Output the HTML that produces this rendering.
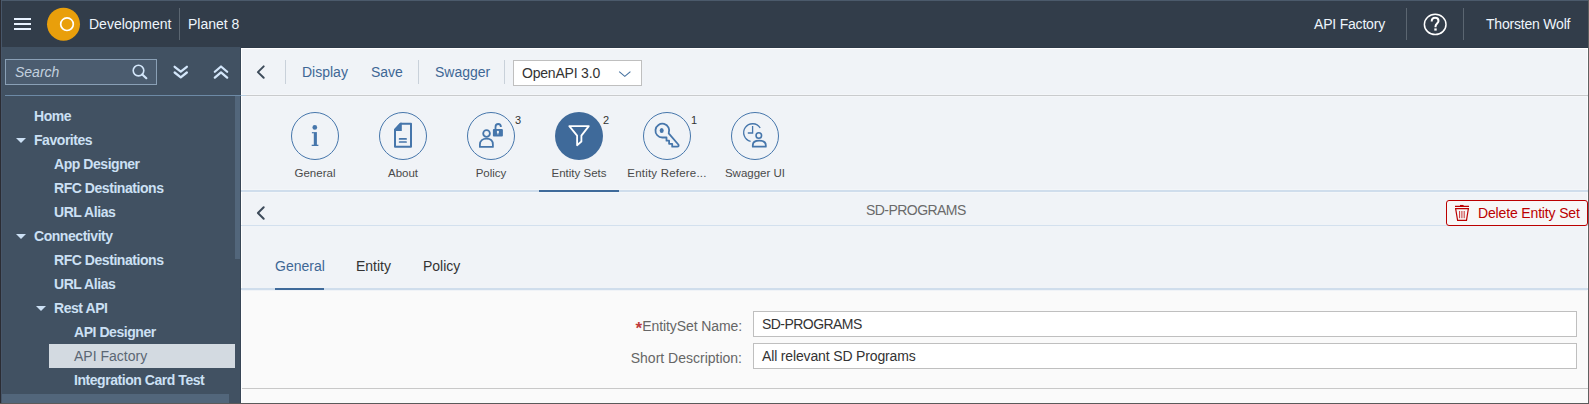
<!DOCTYPE html>
<html><head><meta charset="utf-8">
<style>
*{box-sizing:border-box;margin:0;padding:0}
html,body{width:1589px;height:404px;overflow:hidden;background:#2b2c33;font-family:"Liberation Sans",sans-serif}
.abs{position:absolute}
#frame{position:absolute;left:0;top:0;width:1589px;height:404px;overflow:hidden}
#hdr{left:1px;top:0;width:1587px;height:48px;background:#323d4a;border-top:1px solid #4b5a6b}
.ht{position:absolute;color:#eef5fc;font-size:14px;line-height:16px;white-space:nowrap}
.hsep{position:absolute;top:7px;width:1px;height:32px;background:#5b6671}
#side{left:1px;top:47px;width:240px;height:356px;background:#415162}
#main{left:241px;top:48px;width:1347px;height:355px;background:#f0f3f7}
.nav{position:absolute;color:#cce0f4;font-size:14px;font-weight:bold;line-height:16px;white-space:nowrap;letter-spacing:-0.45px}
.tri{position:absolute;width:0;height:0;border-left:5.2px solid transparent;border-right:5.2px solid transparent;border-top:5.5px solid #cce0f4}
.tb{position:absolute;color:#3e6795;font-size:14px;line-height:16px;white-space:nowrap}
.vsep{position:absolute;width:1px;background:#c9d1da}
.circ{position:absolute;width:48px;height:48px;border-radius:50%;border:1px solid #4676ab}
.lbl{position:absolute;color:#4a4a4a;font-size:11.5px;line-height:14px;white-space:nowrap;text-align:center;width:88px}
.badge{position:absolute;color:#333;font-size:11px;line-height:12px}
</style></head><body>
<div id="frame">
<div class="abs" style="left:1588px;top:0;width:1px;height:404px;background:#606060"></div>
<div class="abs" style="left:0;top:403px;width:1589px;height:1px;background:#5a5a5a"></div>
<!-- header -->
<div id="hdr" class="abs">
  <div class="abs" style="left:239px;top:46px;width:1348px;height:1px;background:#2e3a48"></div>
  <div class="abs" style="left:13px;top:17px;width:17px;height:2px;background:#e8f2ff"></div>
  <div class="abs" style="left:13px;top:22px;width:17px;height:2px;background:#e8f2ff"></div>
  <div class="abs" style="left:13px;top:27px;width:17px;height:2px;background:#e8f2ff"></div>
  <svg class="abs" style="left:43px;top:4px" width="40" height="40" viewBox="0 0 40 40">
    <circle cx="19.5" cy="19.2" r="16.5" fill="#e99f0b"/>
    <circle cx="23" cy="19.2" r="6.3" fill="none" stroke="#fff" stroke-width="1.7"/>
  </svg>
  <div class="ht" style="left:88px;top:15px">Development</div>
  <div class="hsep" style="left:178px"></div>
  <div class="ht" style="left:187px;top:15px">Planet 8</div>
  <div class="ht" style="left:1313px;top:15px;letter-spacing:-0.2px">API Factory</div>
  <div class="hsep" style="left:1405px"></div>
  <svg class="abs" style="left:1419px;top:9px" width="30" height="30" viewBox="0 0 30 30">
    <ellipse cx="15.2" cy="14.45" rx="10.8" ry="10.1" fill="none" stroke="#fff" stroke-width="1.5"/>
    <path d="M11.7,11.4 C11.7,9.1 13.2,7.8 15.1,7.8 C17,7.8 18.5,9.1 18.5,11 C18.5,13.3 15.5,13.9 15.5,16.4 V17.2" fill="none" stroke="#fff" stroke-width="2"/>
    <rect x="14.3" y="18.4" width="2.4" height="2.2" fill="#fff"/>
  </svg>
  <div class="hsep" style="left:1462px"></div>
  <div class="ht" style="left:1485px;top:15px;letter-spacing:-0.2px">Thorsten Wolf</div>
</div>
<!-- sidebar -->
<div id="side" class="abs">
  <div class="abs" style="left:4px;top:12px;width:152px;height:26px;border:1px solid #8aa0b6;background:#4b5c6f"></div>
  <div class="abs" style="left:14px;top:17px;color:#c3d1df;font-size:14px;font-style:italic;line-height:16px">Search</div>
  <svg class="abs" style="left:-1px;top:-47px" width="240" height="90" viewBox="0 0 240 90">
    <circle cx="138.5" cy="70.6" r="5.3" fill="none" stroke="#d3e6fa" stroke-width="1.6"/>
    <path d="M142.3 74.5 L146.3 78.2" stroke="#d3e6fa" stroke-width="2.2" stroke-linecap="round"/>
    <path d="M174.65,66.8 L180.75,71.6 L186.85,66.8 M174.65,72.5 L180.75,77.3 L186.85,72.5" fill="none" stroke="#d3e6fa" stroke-width="2.3" stroke-linecap="round" stroke-linejoin="round"/>
    <path d="M214.85,71.75 L221,66.5 L227.15,71.75 M214.85,77.65 L221,72.4 L227.15,77.65" fill="none" stroke="#d3e6fa" stroke-width="2.3" stroke-linecap="round" stroke-linejoin="round"/>
  </svg>
  <div class="abs" style="left:239px;top:0px;width:1px;height:356px;background:#384656"></div>
  <div class="abs" style="left:4px;top:48px;width:236px;height:1px;background:#6d8aa6"></div>
  <div class="abs" style="left:234px;top:49px;width:5px;height:163px;background:#52667b"></div>
  <div class="nav" style="left:33px;top:61px">Home</div>
  <div class="tri" style="left:15px;top:91px"></div>
  <div class="nav" style="left:33px;top:85px">Favorites</div>
  <div class="nav" style="left:53px;top:109px">App Designer</div>
  <div class="nav" style="left:53px;top:133px">RFC Destinations</div>
  <div class="nav" style="left:53px;top:157px">URL Alias</div>
  <div class="tri" style="left:15px;top:187px"></div>
  <div class="nav" style="left:33px;top:181px">Connectivity</div>
  <div class="nav" style="left:53px;top:205px">RFC Destinations</div>
  <div class="nav" style="left:53px;top:229px">URL Alias</div>
  <div class="tri" style="left:35px;top:259px"></div>
  <div class="nav" style="left:53px;top:253px">Rest API</div>
  <div class="nav" style="left:73px;top:277px">API Designer</div>
  <div class="abs" style="left:48px;top:297px;width:186px;height:24px;background:#d3dae1"></div>
  <div class="nav" style="left:73px;top:301px;color:#5b6774;font-weight:normal;letter-spacing:0">API Factory</div>
  <div class="nav" style="left:73px;top:325px">Integration Card Test</div>
  <div class="abs" style="left:0px;top:347px;width:228px;height:9px;background:#52667b"></div>
</div>
<!-- main -->
<div id="main" class="abs">
  <div class="abs" style="left:1346px;top:0;width:1px;height:355px;background:#fbfcfe"></div>
  <div class="abs" style="left:0;top:0;width:1347px;height:1px;background:#fff"></div>
  <div class="abs" style="left:0;top:0;width:1px;height:355px;background:#fff"></div>
  <!-- toolbar -->
  <svg class="abs" style="left:14px;top:15px" width="14" height="18" viewBox="0 0 14 18">
    <path d="M8.7,3.4 L2.9,9.1 L8.7,14.8" fill="none" stroke="#3d4b5a" stroke-width="2" stroke-linecap="round" stroke-linejoin="round"/>
  </svg>
  <div class="vsep" style="left:44px;top:12px;height:24px"></div>
  <div class="tb" style="left:61px;top:16px">Display</div>
  <div class="tb" style="left:130px;top:16px">Save</div>
  <div class="vsep" style="left:177px;top:12px;height:24px"></div>
  <div class="tb" style="left:194px;top:16px">Swagger</div>
  <div class="vsep" style="left:263px;top:12px;height:24px"></div>
  <div class="abs" style="left:272px;top:12px;width:129px;height:26px;border:1px solid #bfbfbf;background:#fff"></div>
  <div class="tb" style="left:281px;top:17px;color:#333;letter-spacing:-0.2px">OpenAPI 3.0</div>
  <svg class="abs" style="left:376px;top:21px" width="16" height="10" viewBox="0 0 16 10">
    <path d="M2.2,2.6 L7.8,7.4 L13.4,2.6" fill="none" stroke="#44709f" stroke-width="1.1"/>
  </svg>
  <div class="abs" style="left:1px;top:46px;width:1346px;height:3px;background:#f4f6f9"></div>
  <div class="abs" style="left:1px;top:47px;width:1346px;height:1px;background:#c9cbcd"></div>
  <div class="abs" style="left:0px;top:47px;width:5px;height:1px;background:#b9cfe2"></div>
  <!-- icon tab bar -->
  <svg class="abs" style="left:50px;top:64px" width="48" height="48" viewBox="0 0 48 48">
    <circle cx="24" cy="24" r="23.5" fill="none" stroke="#4676ab" stroke-width="1"/>
    <circle cx="23.8" cy="15.4" r="2.35" fill="#4676ab"/>
    <rect x="22.8" y="20.1" width="3.1" height="13.9" fill="#4676ab"/>
    <rect x="20.9" y="20.1" width="2" height="1.2" fill="#4676ab"/>
    <rect x="20.7" y="32.7" width="6.7" height="1.3" fill="#4676ab"/>
  </svg>
  <svg class="abs" style="left:138px;top:64px" width="48" height="48" viewBox="0 0 48 48">
    <circle cx="24" cy="24" r="23.5" fill="none" stroke="#4676ab" stroke-width="1"/>
    <path d="M16,17.8 L21.6,11.8 H32 V34.7 H16 Z" fill="none" stroke="#4676ab" stroke-width="2" stroke-linejoin="round"/>
    <path d="M15,17.4 L21.2,10.8 H22.8 V18.9 H15 Z" fill="#4676ab"/>
    <path d="M20.6,26.9 H27.1 M20.6,30 H27.1" stroke="#4676ab" stroke-width="1.7" stroke-linecap="round"/>
  </svg>
  <svg class="abs" style="left:226px;top:64px" width="48" height="48" viewBox="0 0 48 48">
    <circle cx="24" cy="24" r="23.5" fill="none" stroke="#4676ab" stroke-width="1"/>
    <circle cx="19.55" cy="21.5" r="3.35" fill="none" stroke="#4676ab" stroke-width="1.8"/>
    <path d="M12.9,34.9 V32.6 C12.9,28.6 15.8,26.7 19.4,26.7 C23.1,26.7 25.9,28.6 25.9,32.6 V34.9 Z" fill="none" stroke="#4676ab" stroke-width="1.8" stroke-linejoin="round"/>
    <rect x="25.9" y="17.1" width="10" height="7.4" rx="1" fill="#4676ab"/>
    <path d="M28.5,17.6 V15.2 C28.5,13.1 29.8,12 31.2,12 C32.7,12 33.9,13.1 33.9,14.9" fill="none" stroke="#4676ab" stroke-width="1.8"/>
    <circle cx="30.9" cy="19.9" r="1.1" fill="#f0f3f7"/>
    <rect x="30.4" y="20" width="1" height="2.4" fill="#f0f3f7"/>
  </svg>
  <svg class="abs" style="left:314px;top:64px" width="48" height="48" viewBox="0 0 48 48">
    <circle cx="24" cy="24" r="24" fill="#3f6a9a"/>
    <path d="M14.3,14.1 H33.8 L26.4,23.6 V29.5 L22.1,33.2 V23.6 Z" fill="none" stroke="#fff" stroke-width="1.8" stroke-linejoin="round"/>
  </svg>
  <svg class="abs" style="left:402px;top:64px" width="48" height="48" viewBox="0 0 48 48">
    <circle cx="24" cy="24" r="23.5" fill="none" stroke="#4676ab" stroke-width="1"/>
    <path d="M25.7,21.3 A6.9,6.9 0 1 0 19.5,25.5 H23.5 V28.7 H26.1 V31.8 H29.2 V34.7 H34.2 Q36.4,34.7 35.3,32.5 Z" fill="none" stroke="#4676ab" stroke-width="1.8" stroke-linejoin="round"/>
    <ellipse cx="18.7" cy="18.5" rx="2" ry="2.5" fill="#4676ab"/>
  </svg>
  <svg class="abs" style="left:490px;top:64px" width="48" height="48" viewBox="0 0 48 48">
    <circle cx="24" cy="24" r="23.5" fill="none" stroke="#4676ab" stroke-width="1"/>
    <path d="M29.2,16 A8.9,8.9 0 1 0 19.6,29.3" fill="none" stroke="#4676ab" stroke-width="1.3"/>
    <path d="M21.6,14 V21 H16.8" fill="none" stroke="#4676ab" stroke-width="1.3"/>
    <circle cx="27.8" cy="23.5" r="2.75" fill="none" stroke="#4676ab" stroke-width="1.6"/>
    <path d="M21.8,34.7 V33.2 C21.8,30.2 24.4,28.7 28.2,28.7 C32.1,28.7 34.8,30.2 34.8,33.2 V34.7 Z" fill="none" stroke="#4676ab" stroke-width="1.8" stroke-linejoin="round"/>
  </svg>
  <div class="lbl" style="left:30px;top:118px">General</div>
  <div class="lbl" style="left:118px;top:118px">About</div>
  <div class="lbl" style="left:206px;top:118px">Policy</div>
  <div class="lbl" style="left:294px;top:118px">Entity Sets</div>
  <div class="lbl" style="left:382px;top:118px;letter-spacing:0.2px">Entity Refere...</div>
  <div class="lbl" style="left:470px;top:118px">Swagger UI</div>
  <div class="badge" style="left:274px;top:66px">3</div>
  <div class="badge" style="left:362px;top:66px">2</div>
  <div class="badge" style="left:450px;top:66px">1</div>
  <div class="abs" style="left:1px;top:141px;width:1346px;height:4px;background:#f3f6f9"></div>
  <div class="abs" style="left:0px;top:142px;width:1347px;height:2px;background:#cfddec"></div>
  <div class="abs" style="left:298px;top:142px;width:80px;height:2px;background:#3f6a9a"></div>
  <!-- sub header -->
  <svg class="abs" style="left:14px;top:157px" width="14" height="18" viewBox="0 0 14 18">
    <path d="M8.7,2.3 L2.9,8 L8.7,13.7" fill="none" stroke="#3d4b5a" stroke-width="2" stroke-linecap="round" stroke-linejoin="round"/>
  </svg>
  <div class="abs" style="left:625px;top:154px;color:#6a6a6a;font-size:14px;line-height:16px;letter-spacing:-0.55px;white-space:nowrap">SD-PROGRAMS</div>
  <div class="abs" style="left:0px;top:177px;width:1347px;height:1px;background:#d3e0ee"></div>
  <div class="abs" style="left:1205px;top:152px;width:142px;height:26px;border:1px solid #bb0000;border-radius:3px;background:#f7f7f7"></div>
  <svg class="abs" style="left:1209px;top:152px" width="24" height="24" viewBox="0 0 24 24">
    <path d="M5,6.4 H19 M5,8.6 H19" stroke="#bb0000" stroke-width="1.1"/>
    <path d="M10,5.7 H13.6" stroke="#bb0000" stroke-width="1.5"/>
    <path d="M5.7,9 L7.6,20.3 H16.5 L18.3,9" fill="none" stroke="#bb0000" stroke-width="1.2"/>
    <path d="M9.6,11 V18.2 M11.9,11 V18.2 M14.2,11 V18.2" stroke="#bb0000" stroke-width="0.8"/>
  </svg>
  <div class="abs" style="left:1237px;top:157px;color:#bb0000;font-size:14px;line-height:16px;letter-spacing:-0.15px;white-space:nowrap">Delete Entity Set</div>
  <!-- tabs -->
  <div class="tb" style="left:34px;top:210px;color:#3e6795">General</div>
  <div class="tb" style="left:115px;top:210px;color:#333">Entity</div>
  <div class="tb" style="left:182px;top:210px;color:#333">Policy</div>
  <div class="abs" style="left:0px;top:240px;width:1347px;height:2px;background:#cfddec"></div>
  <div class="abs" style="left:34px;top:240px;width:49px;height:2px;background:#3f6a9a"></div>
  <!-- form -->
  <div class="abs" style="left:1px;top:243px;width:1346px;height:97px;background:#fafafa"></div>
  <div class="abs" style="left:1px;top:340px;width:1346px;height:1px;background:#c8c8c8"></div>
  <div class="abs" style="left:1px;top:341px;width:1346px;height:14px;background:#fafafa"></div>
  <div class="abs" style="left:301px;top:270px;width:200px;text-align:right;color:#666;font-size:14px;line-height:16px;white-space:nowrap;letter-spacing:-0.1px">EntitySet Name:</div>
  <div class="abs" style="left:394.5px;top:273px;color:#bf3b3b;font-size:17px;font-weight:bold;line-height:16px">*</div>
  <div class="abs" style="left:301px;top:302px;width:200px;text-align:right;color:#666;font-size:14px;line-height:16px;white-space:nowrap">Short Description:</div>
  <div class="abs" style="left:512px;top:263px;width:824px;height:26px;border:1px solid #bfbfbf;background:#fff"></div>
  <div class="abs" style="left:512px;top:295px;width:824px;height:26px;border:1px solid #bfbfbf;background:#fff"></div>
  <div class="abs" style="left:521px;top:268px;color:#333;font-size:14px;line-height:16px;white-space:nowrap;letter-spacing:-0.55px">SD-PROGRAMS</div>
  <div class="abs" style="left:521px;top:300px;color:#333;font-size:14px;line-height:16px;white-space:nowrap;letter-spacing:-0.15px">All relevant SD Programs</div>
</div>
<div class="abs" style="left:1px;top:1px;width:1px;height:402px;background:#475669"></div>
</div>
</body></html>
